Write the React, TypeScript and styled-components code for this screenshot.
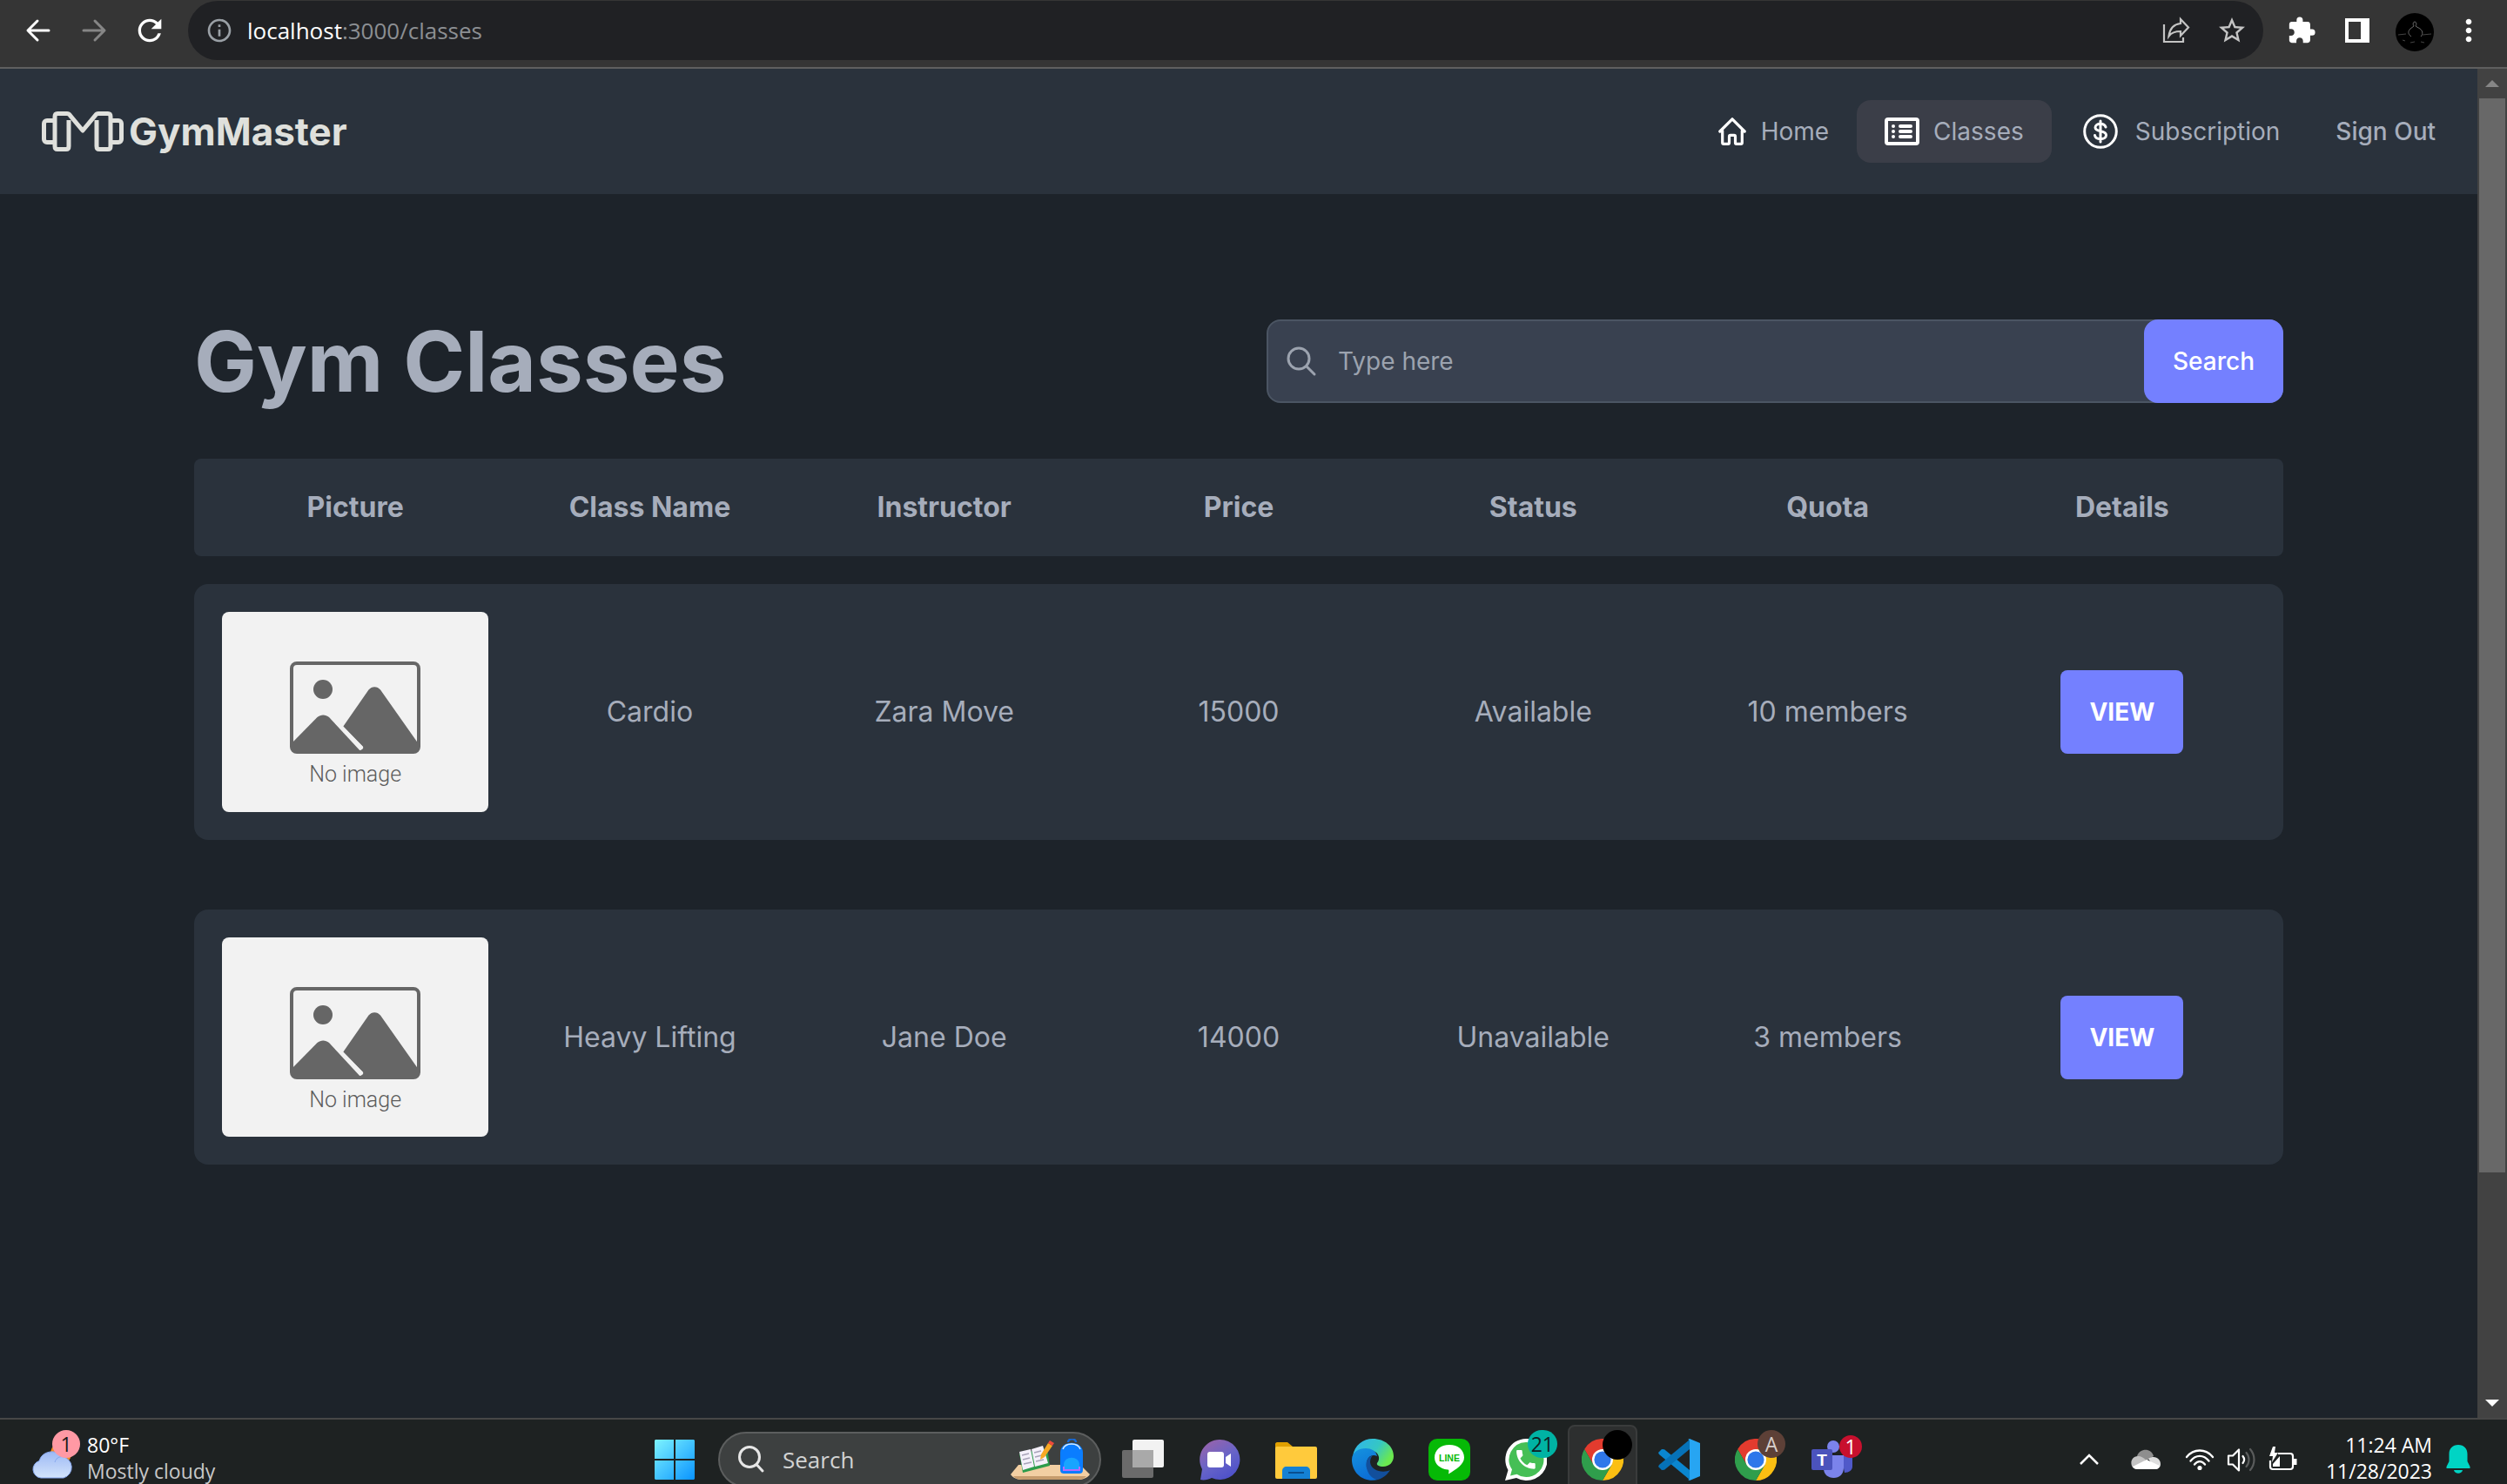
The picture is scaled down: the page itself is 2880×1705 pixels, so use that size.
import React from "react";
import styled, { createGlobalStyle } from "styled-components";
import {
  MdExtension,
  MdInfoOutline,
  MdMoreVert,
  MdRefresh,
  MdStarBorder,
} from "react-icons/md";

const color = {
  chrome: "#353535",
  omnibox: "#202124",
  nav: "#2a323c",
  page: "#1d232a",
  pill: "#3b3e48",
  text: "#a6adbb",
  primary: "#7480ff",
  taskbar: "#1e2222",
};

const uiFont = `"Segoe UI", "Open Sans", "Noto Sans", sans-serif`;
const appFont = `Inter, "Liberation Sans", sans-serif`;

const GlobalStyle = createGlobalStyle`
  *, *::before, *::after { box-sizing: border-box; }
  body { margin: 0; background: ${color.page}; font-family: ${appFont}; }
  button, input { font: inherit; color: inherit; }
  button { border: 0; padding: 0; background: none; cursor: pointer; }
  svg { display: block; flex: none; }
  a { color: inherit; text-decoration: none; }
  h1 { margin: 0; }
`;

const Screen = styled.div`
  display: grid;
  grid-template-rows: auto minmax(0, 1fr) 76px;
  height: 100vh;
  overflow: hidden;
`;

/* ---------- browser toolbar ---------- */

const Toolbar = styled.header`
  display: flex;
  align-items: flex-start;
  height: 79px;
  padding: 1px 24px 0;
  background: ${color.chrome};
  border-bottom: 2px solid #5f5f5f;
  font-family: ${uiFont};
`;

const ToolGroup = styled.div`
  display: flex;
  align-items: center;
  gap: 24px;
  height: 68px;
`;

const ToolButton = styled.button<{ $tone?: string }>`
  display: grid;
  place-items: center;
  width: 40px;
  height: 40px;
  color: ${(p) => p.$tone ?? "#ffffff"};
`;

const Omnibox = styled.div`
  display: flex;
  align-items: center;
  flex: 1;
  height: 68px;
  margin: 0 24px;
  padding: 0 16px 0 20px;
  border-radius: 34px;
  background: ${color.omnibox};
`;

const Address = styled.div`
  flex: 1;
  padding-left: 16px;
  font-size: 26px;
  line-height: 36px;
  color: #8c8f93;

  strong {
    font-weight: 400;
    color: #ffffff;
  }
`;

/* ---------- page frame ---------- */

const Viewport = styled.div`
  display: flex;
  min-height: 0;
`;

const Page = styled.div`
  flex: 1;
  min-width: 0;
  background: ${color.page};
  color: ${color.text};
`;

const ScrollTrack = styled.div`
  display: flex;
  flex-direction: column;
  width: 34px;
  padding: 0 2px;
  background: #424242;
`;

const ScrollArrow = styled.div`
  display: grid;
  place-items: center;
  height: 34px;
`;

const ScrollThumb = styled.div`
  flex: 1234;
  background: #686868;
`;

const ScrollRest = styled.div`
  flex: 248;
`;

/* ---------- site navigation ---------- */

const NavBar = styled.nav`
  display: flex;
  align-items: center;
  justify-content: space-between;
  height: 144px;
  padding: 0 16px 0 48px;
  background: ${color.nav};
`;

const Brand = styled.a`
  display: flex;
  align-items: center;
  gap: 6px;
  color: #dfe0dc;
  font-size: 44px;
  font-weight: 700;
  line-height: 56px;
`;

const NavList = styled.div`
  display: flex;
  align-items: center;
`;

const NavLink = styled.a<{ $active?: boolean; $strong?: boolean }>`
  display: flex;
  align-items: center;
  gap: 16px;
  height: 72px;
  padding: 0 32px;
  border-radius: 16px;
  background: ${(p) => (p.$active ? color.pill : "transparent")};
  font-size: 28px;
  font-weight: ${(p) => (p.$strong ? 500 : 400)};
  line-height: 40px;

  svg {
    color: #ffffff;
  }
`;

const IconSlot = styled.span`
  display: grid;
  place-items: center;
  width: 48px;
`;

/* ---------- classes page ---------- */

const Main = styled.main`
  max-width: 2400px;
  margin: 0 auto;
  padding-top: 144px;
`;

const Heading = styled.div`
  display: grid;
  grid-template-columns: 1fr 1fr;
  align-items: center;
  gap: 64px;
`;

const Title = styled.h1`
  font-size: 96px;
  font-weight: 700;
  line-height: 96px;
`;

const SearchForm = styled.form`
  display: flex;
  height: 96px;
  border: 2px solid #4b5563;
  border-radius: 16px;
  background: #394150;
  font-size: 28px;
`;

const SearchLabel = styled.label`
  display: flex;
  align-items: center;
  flex: 1;
  gap: 24px;
  padding-left: 20px;
  color: #9ca3af;
`;

const SearchInput = styled.input`
  flex: 1;
  min-width: 0;
  padding: 0;
  border: 0;
  outline: 0;
  background: transparent;

  &::placeholder {
    color: #9ca3af;
    opacity: 1;
  }
`;

const PrimaryButton = styled.button<{ $radius: number }>`
  height: 96px;
  padding: 0 33px;
  border-radius: ${(p) => p.$radius}px;
  background: ${color.primary};
  color: #ffffff;
  font-size: 28px;
  font-weight: ${(p) => (p.$radius > 8 ? 500 : 700)};
  line-height: 40px;

  ${SearchForm} & {
    margin: -2px;
  }
`;

const ClassTable = styled.table`
  display: flex;
  flex-direction: column;
  gap: 32px;
  margin-top: 64px;
  font-size: 32px;
  line-height: 48px;
  text-align: center;

  thead {
    display: block;
  }

  tbody {
    display: flex;
    flex-direction: column;
    gap: 80px;
  }
`;

const Row = styled.tr<{ $head?: boolean }>`
  display: grid;
  grid-template-columns: repeat(7, minmax(0, 1fr));
  align-items: center;
  gap: 32px;
  padding: 32px;
  border-radius: ${(p) => (p.$head ? 8 : 16)}px;
  background: ${color.nav};

  th,
  td {
    padding: 0;
  }

  th {
    font-weight: 700;
  }
`;

const Picture = styled.figure`
  display: flex;
  flex-direction: column;
  align-items: center;
  aspect-ratio: 4 / 3;
  margin: 0;
  padding-top: 57px;
  border-radius: 8px;
  background: #f2f2f2;
  color: #5c5c5c;

  figcaption {
    margin-top: 6px;
    font-family: "Liberation Sans Narrow", Roboto, sans-serif;
    font-size: 25px;
    font-weight: 300;
    line-height: 36px;
  }
`;

/* ---------- taskbar ---------- */

const Taskbar = styled.footer`
  overflow: hidden;
  border-top: 2px solid #474747;
  background: ${color.taskbar};
  color: #ffffff;
  font-family: ${uiFont};
  font-size: 23px;
  line-height: 30px;
`;

const TaskRow = styled.div`
  display: grid;
  grid-template-columns: 1fr auto 1fr;
  align-items: center;
  height: 92px;
`;

const Weather = styled.button`
  display: flex;
  align-items: center;
  gap: 14px;
  padding-left: 36px;
  text-align: left;
`;

const WeatherText = styled.span`
  display: flex;
  flex-direction: column;
  padding-bottom: 4px;

  small {
    font-size: inherit;
    color: #c8c8c8;
  }
`;

const BadgeHost = styled.span`
  position: relative;
  display: block;
`;

const Badge = styled.span<{ $bg: string; $fg: string; $size?: number; $top?: number; $right?: number }>`
  position: absolute;
  top: ${(p) => p.$top ?? -10}px;
  right: ${(p) => p.$right ?? -12}px;
  min-width: ${(p) => p.$size ?? 32}px;
  height: ${(p) => p.$size ?? 32}px;
  padding: 0 4px;
  border-radius: 18px;
  background: ${(p) => p.$bg};
  color: ${(p) => p.$fg};
  font-size: 23px;
  line-height: ${(p) => p.$size ?? 32}px;
  text-align: center;
`;

const Apps = styled.div`
  display: flex;
  align-items: center;
`;

const AppButton = styled.button<{ $open?: boolean }>`
  display: grid;
  place-items: center;
  width: 80px;
  height: 80px;
  margin: 0 4px;
  border: ${(p) => (p.$open ? "2px solid #3a3c3c" : "0")};
  border-radius: 8px;
  background: ${(p) => (p.$open ? "#2d2f2f" : "transparent")};
`;

const TaskSearch = styled.label`
  display: flex;
  align-items: center;
  width: 440px;
  height: 64px;
  margin: 0 4px 0 6px;
  padding: 0 10px 0 18px;
  border: 2px solid #5c5e5e;
  border-radius: 32px;
  background: #3d4040;
  gap: 18px;

  input {
    flex: 1;
    min-width: 0;
    padding: 0;
    border: 0;
    outline: 0;
    background: transparent;
    font-size: 26px;
    line-height: 36px;
  }

  input::placeholder {
    color: #d2d3d3;
    opacity: 1;
  }
`;

const Tray = styled.div`
  display: flex;
  align-items: center;
  justify-content: flex-end;
  padding-right: 42px;
`;

const TrayIcons = styled.div`
  display: flex;
  align-items: center;
  gap: 28px;
  margin-right: 32px;
`;

const StatusIcons = styled.button`
  display: flex;
  align-items: center;
  gap: 14px;
`;

const Clock = styled.time`
  display: flex;
  flex-direction: column;
  margin-right: 16px;
  padding-bottom: 4px;
  text-align: right;
`;

/* ---------- drawings ---------- */

const ArrowIcon = ({ flip }: { flip?: boolean }) => (
  <svg width="30" height="30" viewBox="0 0 30 30" fill="none" stroke="currentColor" strokeWidth="3" strokeLinecap="round" strokeLinejoin="round">
    <path d={flip ? "M3 15H26M16 4l11 11-11 11" : "M27 15H4M14 4L3 15l11 11"} />
  </svg>
);

const ShareIcon = () => (
  <svg width="32" height="32" viewBox="0 0 32 32" fill="none" stroke="currentColor" strokeWidth="2.2">
    <path d="M2 9v20h22v-5" />
    <path d="M21 3l9 9.5-9 9.5v-5c-6 0-10.500 1.500-13.500 5.500 1-8 5-13.500 13.500-14.500z" />
  </svg>
);

const SidePanelIcon = () => (
  <svg width="28" height="28" viewBox="0 0 28 28">
    <path fill="currentColor" fillRule="evenodd" d="M0 0h28v28H0zM4 4v20h14V4z" />
  </svg>
);

const Avatar = () => (
  <svg width="44" height="44" viewBox="0 0 44 44">
    <circle cx="22" cy="22" r="22" fill="#000" />
    <g fill="none" stroke="#6a6a6a" strokeWidth="1">
      <path d="M22 10c2 0 2.500 3 1 5l5 3c3 2 4 6 1 9M22 10c-2 0-2.500 3-1 5l-4 3c-3 3-3 6 1 9" />
      <path d="M3 25l9-1M31 25l10-1M8 31l3 1M17 34l5-1M29 33l4 1" stroke="#444" />
    </g>
  </svg>
);

const Triangle = ({ down }: { down?: boolean }) => (
  <svg width="16" height="8" viewBox="0 0 16 8">
    <path d={down ? "M0 0h16L8 8z" : "M0 8h16L8 0z"} fill={down ? "#ffffff" : "#868686"} />
  </svg>
);

const LogoIcon = () => (
  <svg width="94" height="46" viewBox="0 0 94 46" fill="none" stroke="currentColor" strokeWidth="5" strokeLinejoin="round">
    <path d="M14 10.500H6c-2 0-3.500 1.500-3.500 3.500v18c0 2 1.500 3.500 3.500 3.500h8" />
    <path d="M80 10.500h8c2 0 3.500 1.500 3.500 3.500v18c0 2-1.500 3.500-3.500 3.500h-8" />
    <path d="M31 10v30c0 2-1 3.500-3 3.500H18c-2 0-3-1.500-3-3.500V6c0-2 1-3.500 3-3.500h11c1.500 0 2.500.5 3.300 1.800L47 22 61.700 4.300C62.500 3 63.500 2.500 65 2.500h11c2 0 3 1.500 3 3.500v34c0 2-1 3.500-3 3.500H66c-2 0-3-1.500-3-3.500V10" />
  </svg>
);

const HomeIcon = () => (
  <svg width="34" height="32" viewBox="-1 0 34 32" fill="none" stroke="currentColor" strokeWidth="3.200" strokeLinecap="round" strokeLinejoin="round">
    <path d="M1.800 16L16 1.800 30.200 16M4.700 15v14c0 1 .5 1.400 1.400 1.400h5.200c.8 0 1.200-.5 1.200-1.300V22c0-1 .5-1.600 1.400-1.600h4.200c.9 0 1.400.6 1.400 1.600v7.100c0 .8.400 1.300 1.200 1.300h5.200c.9 0 1.400-.4 1.400-1.400V15" />
  </svg>
);

const ListIcon = () => (
  <svg width="40" height="32" viewBox="0 0 40 32" fill="none" stroke="currentColor" strokeWidth="4">
    <rect x="2" y="2" width="36" height="28" rx="2" />
    <path d="M18 10h12M18 16h12M18 22h12M10 10h.01M10 16h.01M10 22h.01" strokeLinecap="round" />
  </svg>
);

const DollarIcon = () => (
  <svg width="40" height="40" viewBox="0 0 40 40" fill="none" stroke="currentColor" strokeWidth="3" strokeLinecap="round">
    <circle cx="20" cy="20" r="18.300" />
    <path d="M20 8v24M26 15c-.8-2.500-3-3.700-6-3.700-3.500 0-6 1.600-6 4.200 0 6 12.500 2.500 12.500 8.700 0 2.800-2.800 4.500-6.500 4.500-3.500 0-6-1.500-6.500-4.200" />
  </svg>
);

const SearchIcon = () => (
  <svg width="36" height="36" viewBox="0 0 36 36" fill="none" stroke="currentColor" strokeWidth="3" strokeLinecap="round">
    <circle cx="15" cy="15" r="12" />
    <path d="M24 24l9 9" />
  </svg>
);

const TaskSearchIcon = () => (
  <svg width="36" height="36" viewBox="0 0 36 36" fill="none" stroke="#e6e6e6" strokeWidth="3" strokeLinecap="round">
    <circle cx="16" cy="15" r="11.500" />
    <path d="M24.500 24l6.500 7" />
  </svg>
);

const NoImageDrawing = () => (
  <svg width="150" height="106" viewBox="0 0 150 106">
    <rect x="2" y="2" width="146" height="102" rx="6" fill="#f2f2f2" stroke="#666" strokeWidth="4" />
    <circle cx="38" cy="32" r="11" fill="#666" />
    <path fill="#666" d="M90.500 32.500c3.500-4.500 10-4.500 13.500 0L148 95v4c0 3-2 5-5 5H80l4-6L61 75z" />
    <path fill="#666" d="M2 94l29.500-30c4-3.500 9.500-3.500 13.500 0L82 104H8c-4 0-6-2-6-5z" />
    <path d="M54 70l28 29" stroke="#f2f2f2" strokeWidth="4.500" strokeLinecap="round" />
  </svg>
);

const CloudIcon = () => (
  <svg width="50" height="48" viewBox="0 0 50 48">
    <defs>
      <linearGradient id="cloud" x1="0" y1="0" x2="0" y2="1">
        <stop offset="0" stopColor="#9db9f5" />
        <stop offset="1" stopColor="#d3e4fb" />
      </linearGradient>
    </defs>
    <circle cx="34" cy="17" r="12" fill="#f58a1f" />
    <path d="M11 45a10 10 0 0 1-2-19.500A15 15 0 0 1 35 20.500 12.500 12.500 0 0 1 37 45z" fill="url(#cloud)" stroke="#86a7ee" />
    <path d="M27 27c1-4 4-6.500 9-6.500" stroke="#86a7ee" fill="none" />
  </svg>
);

const WindowsIcon = () => (
  <svg width="48" height="48" viewBox="0 0 48 48">
    <defs>
      <linearGradient id="win" x1="0" y1="0" x2="1" y2="1">
        <stop offset="0" stopColor="#7df3ff" />
        <stop offset="1" stopColor="#0a94ff" />
      </linearGradient>
    </defs>
    <path fill="url(#win)" d="M2 1h21v22H1V2zM25 1h21l1 1v21H25zM1 25h22v22H2l-1-1zM25 25h22v21l-1 1H25z" />
  </svg>
);

const DeskIcon = () => (
  <svg width="92" height="48" viewBox="0 0 92 48">
    <path d="M0 41l9-11h71l11 11c-3 4-8 6-14 6H14C7 47 3 45 0 41z" fill="#f2cfa3" />
    <path d="M3 43h84c-3 3-6 4-11 4H14c-5 0-8-1-11-4z" fill="#c69c6d" />
    <path d="M10 17l4 22 31-8-3-20z" fill="#2c9c4b" />
    <path d="M10 15l13-3 4 20-13 4zM24 12l13-4 6 20-15 4z" fill="#f4f0fa" />
    <path d="M13 19l8-2M14 24l8-2M15 29l9-2M27 16l8-2M28 21l8-2M29 26l9-2" stroke="#a7a3b8" strokeWidth="1.500" />
    <path d="M34 24l1-6 8-13 5 3-9 13z" fill="#f7a823" />
    <path d="M43 5l2-3 5 3-2 3z" fill="#ef4b3c" />
    <path d="M66 4c0-5 9-5 9 0" fill="none" stroke="#1769d6" strokeWidth="2.500" />
    <path d="M57 16c0-15 26-15 26 0v20c0 3-2 4-4 4H61c-2 0-4-1-4-4z" fill="#0a7dff" />
    <path d="M60 12c3-8 17-8 20 0" fill="none" stroke="#d8ecff" strokeWidth="1.500" />
    <path d="M61 30c0-11 18-11 18 0v7H61z" fill="#18a4ff" />
    <path d="M61 32v4h18v-4" fill="none" stroke="#b36bff" strokeWidth="2" />
  </svg>
);

const TaskViewIcon = () => (
  <svg width="48" height="48" viewBox="0 0 48 48">
    <rect x="12" y="1" width="36" height="32" rx="2" fill="#f2f2f2" />
    <rect x="0" y="13" width="36" height="32" rx="2" fill="#6b6b6b" />
    <path d="M12 13h24v20H12z" fill="#a9a9a9" />
  </svg>
);

const ChatIcon = () => (
  <svg width="48" height="48" viewBox="0 0 48 48">
    <defs>
      <linearGradient id="chat" x1="0" y1="0" x2=".6" y2="1">
        <stop offset="0" stopColor="#a063a6" />
        <stop offset=".6" stopColor="#6764c8" />
        <stop offset="1" stopColor="#4f52c9" />
      </linearGradient>
    </defs>
    <path d="M24 1a23 23 0 1 1-9 44c-4 2-9 3-13 2l2-12A23 23 0 0 1 24 1z" fill="url(#chat)" />
    <rect x="10" y="15" width="19" height="18" rx="3" fill="#fff" />
    <path d="M31 21l6-4v15l-6-4z" fill="#fff" />
  </svg>
);

const FolderIcon = () => (
  <svg width="48" height="48" viewBox="0 0 48 48">
    <path d="M0 12V6c0-1 1-2 2-2h12l6 5h26v6H0z" fill="#e0a000" />
    <rect x="0" y="9" width="48" height="37" rx="2" fill="#ffca3c" />
    <path d="M8 46V37c0-3 2-5 5-5h22c3 0 5 2 5 5v9z" fill="#1481d4" />
    <path d="M15 39h18" stroke="#0a4f8f" strokeWidth="2" />
  </svg>
);

const EdgeIcon = () => (
  <svg width="48" height="48" viewBox="0 0 48 48">
    <defs>
      <linearGradient id="edgeTop" x1="0" y1="0" x2="1" y2=".5">
        <stop offset="0" stopColor="#2fb4f0" />
        <stop offset=".6" stopColor="#35c7c4" />
        <stop offset="1" stopColor="#6be84f" />
      </linearGradient>
      <linearGradient id="edgeLeft" x1="0" y1="0" x2=".4" y2="1">
        <stop offset="0" stopColor="#1593df" />
        <stop offset="1" stopColor="#0c6fd6" />
      </linearGradient>
    </defs>
    <path d="M1 20C3 7 13 0 24 0c14 0 24 9 24 20 0 7-5 12-12 12-5 0-8-2-7-4 5-6 1-14-8-15C11 11 3 14 1 20z" fill="url(#edgeTop)" />
    <path d="M0 24c0-9 8-13 16-13 6 0 12 3 13 9-6-3-12 1-12 9 0 9 6 16 13 18C14 51 0 40 0 24z" fill="url(#edgeLeft)" />
    <path d="M24 19c-6 2-9 8-7 15 2 8 8 13 13 13 6-2 11-6 14-11-8 4-22 1-23-9 0-3 1-6 3-8z" fill="#124f9c" />
  </svg>
);

const LineIcon = () => (
  <svg width="48" height="48" viewBox="0 0 48 48">
    <rect width="48" height="48" rx="10" fill="#06b906" />
    <path d="M24 7c10 0 17 6 17 14.500 0 8-9 13.500-18 19 .5-3 1-5-1-5C13 34.500 7 29 7 21.500 7 13 14 7 24 7z" fill="#fff" />
    <text x="24" y="26" textAnchor="middle" fontFamily="Liberation Sans, sans-serif" fontWeight="700" fontSize="10.500" fill="#06b906">LINE</text>
  </svg>
);

const WhatsAppIcon = () => (
  <svg width="48" height="48" viewBox="0 0 48 48">
    <path d="M24 0a24 24 0 1 1-11 45L0 48l3.500-12A24 24 0 0 1 24 0z" fill="#fff" />
    <path d="M24 4a20 20 0 1 1-10.500 36.700L6 42.500l2-7.300A20 20 0 0 1 24 4z" fill="#45bf55" />
    <path transform="translate(9.500 9.500) scale(1.200)" fill="#fff" d="M6.620 10.790c1.440 2.830 3.760 5.140 6.590 6.590l2.200-2.200c.27-.27.67-.36 1.020-.24 1.120.37 2.330.57 3.570.57.55 0 1 .45 1 1V20c0 .55-.45 1-1 1-9.390 0-17-7.610-17-17 0-.55.450-1 1-1h3.500c.55 0 1 .45 1 1 0 1.250.2 2.450.57 3.570.11.350.03.740-.25 1.020l-2.200 2.200z" />
  </svg>
);

const ChromeIcon = () => (
  <svg width="48" height="48" viewBox="0 0 48 48">
    <path d="M3.200 12A24 24 0 0 1 44.800 12H24L13.600 30z" fill="#e33b2e" />
    <path d="M44.800 12A24 24 0 0 1 24 48l10.400-18L24 12z" fill="#fbbf12" />
    <path d="M3.200 12A24 24 0 0 0 24 48l10.400-18H13.600z" fill="#2f9e4c" />
    <circle cx="24" cy="24" r="12" fill="#fff" />
    <circle cx="24" cy="24" r="9.600" fill="#2f77ea" />
  </svg>
);

const CodeIcon = () => (
  <svg width="48" height="48" viewBox="0 0 48 48">
    <path d="M0 16l4-4 3 .300L36 36v11L1 18z" fill="#0a86cf" />
    <path d="M0 32l4 4 3-.300L36 12V1L1 30z" fill="#0672b8" />
    <path d="M36 0l12 5v38l-12 5-2-1c1.500 0 2-1 2-2V3c0-1-.5-2-2-2z" fill="#27a5f2" />
  </svg>
);

const TeamsIcon = () => (
  <svg width="48" height="48" viewBox="0 0 48 48">
    <circle cx="25" cy="9" r="7" fill="#7b83eb" />
    <path d="M34 19h13v13c0 4-4 7-9 7z" fill="#5059c9" />
    <path d="M14 19h23v14c0 8-5 12-11.500 12S14 41 14 34z" fill="#7b83eb" />
    <rect x="0" y="12" width="24" height="24" rx="2" fill="#4b53bc" />
    <text x="12" y="31" textAnchor="middle" fontFamily="Liberation Sans, sans-serif" fontWeight="700" fontSize="19" fill="#fff">T</text>
  </svg>
);

const ChevronUp = () => (
  <svg width="22" height="16" viewBox="0 0 22 16" fill="none" stroke="#fff" strokeWidth="2.500">
    <path d="M1 13L11 3l10 10" />
  </svg>
);

const OneDriveIcon = () => (
  <svg width="34" height="24" viewBox="0 0 34 24">
    <path d="M7 8c3-9 16-10 19 0l-12 8z" fill="#8e8e8e" />
    <path d="M7 23C-2 23-2 8 8 8c4 0 6 2 9 4l-11 11z" fill="#c4c4c4" />
    <path d="M20 11c8-5 14 1 14 6 0 4-3 6-6 6z" fill="#dedede" />
    <path d="M2 20l16-8 15 7c-1 3-3 4-6 4H7c-2 0-4-1-5-3z" fill="#fff" />
  </svg>
);

const WifiIcon = () => (
  <svg width="34" height="26" viewBox="0 0 34 26" fill="none" stroke="#fff" strokeWidth="2.300" strokeLinecap="round">
    <path d="M2 10c8-10 22-10 30 0M6.500 14.500c6-7.500 15-7.500 21 0M11 18.500c3.500-4.500 8.500-4.500 12 0" />
    <circle cx="17" cy="22.500" r="2.600" fill="#fff" stroke="none" />
  </svg>
);

const SpeakerIcon = () => (
  <svg width="34" height="30" viewBox="0 0 34 30" fill="none" stroke="#fff" strokeWidth="2.200" strokeLinecap="round" strokeLinejoin="round">
    <path d="M2 10.500h5l7-7v24l-7-7H2z" />
    <path d="M18.500 11c2 2.500 2 5.500 0 8" />
    <path d="M22.500 7c4 4.500 4 11.500 0 16M27 3c6 7 6 17 0 24" stroke="#5a5c5c" />
  </svg>
);

const BatteryIcon = () => (
  <svg width="34" height="30" viewBox="0 0 34 30" fill="none" stroke="#fff" strokeWidth="2.200">
    <path d="M11 8h14c2 0 3 1 3 3v12c0 2-1 3-3 3H5c-2 0-3-1-3-3v-7" />
    <path d="M5 23v-3l8-9v12zM5 0L1 11h4l-1 7 7-11H7l1-7zM29 14h3.500v7H29z" fill="#fff" stroke="none" />
  </svg>
);

const BellIcon = () => (
  <svg width="28" height="34" viewBox="0 0 28 34">
    <path d="M14 0c6.500 0 10.500 4.500 10.500 10.500V19l3 6v2H.5v-2l3-6v-8.500C3.500 4.500 7.500 0 14 0z" fill="#00d4c4" />
    <path d="M9 29h10c-1 5-9 5-10 0z" fill="#00d4c4" />
  </svg>
);

/* ---------- data ---------- */

const columns = ["Picture", "Class Name", "Instructor", "Price", "Status", "Quota", "Details"];

const classes = [
  { name: "Cardio", instructor: "Zara Move", price: 15000, status: "Available", quota: 10 },
  { name: "Heavy Lifting", instructor: "Jane Doe", price: 14000, status: "Unavailable", quota: 3 },
];

const taskApps: { label: string; icon: React.ReactNode; open?: boolean; badge?: React.ReactNode }[] = [
  { label: "Task view", icon: <TaskViewIcon /> },
  { label: "Chat", icon: <ChatIcon /> },
  { label: "File Explorer", icon: <FolderIcon /> },
  { label: "Edge", icon: <EdgeIcon /> },
  { label: "LINE", icon: <LineIcon /> },
  { label: "WhatsApp", icon: <WhatsAppIcon />, badge: <Badge $bg="#00b3a4" $fg="#10201f">21</Badge> },
  {
    label: "Chrome",
    icon: <ChromeIcon />,
    open: true,
    badge: <Badge $bg="#000000" $fg="#333333" $size={34} $right={-10} />,
  },
  { label: "Visual Studio Code", icon: <CodeIcon /> },
  {
    label: "Chrome, second profile",
    icon: <ChromeIcon />,
    badge: <Badge $bg="#5d4037" $fg="#d8cfcc" $right={-10}>A</Badge>,
  },
  {
    label: "Teams",
    icon: <TeamsIcon />,
    badge: <Badge $bg="#c8102e" $fg="#ffffff" $size={26} $top={-4} $right={-10}>1</Badge>,
  },
];

/* ---------- parts ---------- */

const BrowserToolbar = () => (
  <Toolbar>
    <ToolGroup>
      <ToolButton aria-label="Back"><ArrowIcon /></ToolButton>
      <ToolButton aria-label="Forward" $tone="#868686"><ArrowIcon flip /></ToolButton>
      <ToolButton aria-label="Reload"><MdRefresh size={40} /></ToolButton>
    </ToolGroup>
    <Omnibox>
      <MdInfoOutline size={32} color="#9aa0a6" />
      <Address><strong>localhost</strong>:3000/classes</Address>
      <ToolGroup>
        <ToolButton aria-label="Share" $tone="#c4c4c4"><ShareIcon /></ToolButton>
        <ToolButton aria-label="Bookmark" $tone="#c4c4c4"><MdStarBorder size={36} /></ToolButton>
      </ToolGroup>
    </Omnibox>
    <ToolGroup>
      <ToolButton aria-label="Extensions"><MdExtension size={34} /></ToolButton>
      <ToolButton aria-label="Side panel"><SidePanelIcon /></ToolButton>
      <ToolButton aria-label="Profile"><Avatar /></ToolButton>
      <ToolButton aria-label="Menu"><MdMoreVert size={40} /></ToolButton>
    </ToolGroup>
  </Toolbar>
);

const SiteNav = () => (
  <NavBar>
    <Brand href="#"><LogoIcon />GymMaster</Brand>
    <NavList>
      <NavLink href="#home"><HomeIcon />Home</NavLink>
      <NavLink href="#classes" $active><ListIcon />Classes</NavLink>
      <NavLink href="#subscription"><IconSlot><DollarIcon /></IconSlot>Subscription</NavLink>
      <NavLink href="#signout" $strong>Sign Out</NavLink>
    </NavList>
  </NavBar>
);

const ClassesPage = () => (
  <Main>
    <Heading>
      <Title>Gym Classes</Title>
      <SearchForm onSubmit={(e) => e.preventDefault()}>
        <SearchLabel>
          <SearchIcon />
          <SearchInput type="text" placeholder="Type here" aria-label="Search classes" />
        </SearchLabel>
        <PrimaryButton type="submit" $radius={16}>Search</PrimaryButton>
      </SearchForm>
    </Heading>
    <ClassTable>
      <thead>
        <Row $head>
          {columns.map((c) => <th key={c} scope="col">{c}</th>)}
        </Row>
      </thead>
      <tbody>
        {classes.map((c) => (
          <Row key={c.name}>
            <td>
              <Picture>
                <NoImageDrawing />
                <figcaption>No image</figcaption>
              </Picture>
            </td>
            <td>{c.name}</td>
            <td>{c.instructor}</td>
            <td>{c.price}</td>
            <td>{c.status}</td>
            <td>{c.quota} members</td>
            <td><PrimaryButton type="button" $radius={8}>VIEW</PrimaryButton></td>
          </Row>
        ))}
      </tbody>
    </ClassTable>
  </Main>
);

const DesktopTaskbar = () => (
  <Taskbar>
    <TaskRow>
      <Weather type="button">
        <BadgeHost>
          <CloudIcon />
          <Badge $bg="#ff99a4" $fg="#1a1a1a" $right={-6}>1</Badge>
        </BadgeHost>
        <WeatherText>
          <span>80°F</span>
          <small>Mostly cloudy</small>
        </WeatherText>
      </Weather>
      <Apps>
        <AppButton aria-label="Start"><WindowsIcon /></AppButton>
        <TaskSearch>
          <TaskSearchIcon />
          <input type="text" placeholder="Search" aria-label="Search Windows" />
          <DeskIcon />
        </TaskSearch>
        {taskApps.map((app) => (
          <AppButton key={app.label} aria-label={app.label} $open={app.open}>
            <BadgeHost>
              {app.icon}
              {app.badge}
            </BadgeHost>
          </AppButton>
        ))}
      </Apps>
      <Tray>
        <TrayIcons>
          <ToolButton aria-label="Show hidden icons"><ChevronUp /></ToolButton>
          <OneDriveIcon />
          <StatusIcons type="button" aria-label="Network, volume and battery">
            <WifiIcon />
            <SpeakerIcon />
            <BatteryIcon />
          </StatusIcons>
        </TrayIcons>
        <Clock>
          <span>11:24 AM</span>
          <span>11/28/2023</span>
        </Clock>
        <BellIcon />
      </Tray>
    </TaskRow>
  </Taskbar>
);

export default function App() {
  return (
    <Screen>
      <GlobalStyle />
      <BrowserToolbar />
      <Viewport>
        <Page>
          <SiteNav />
          <ClassesPage />
        </Page>
        <ScrollTrack>
          <ScrollArrow><Triangle /></ScrollArrow>
          <ScrollThumb />
          <ScrollRest />
          <ScrollArrow><Triangle down /></ScrollArrow>
        </ScrollTrack>
      </Viewport>
      <DesktopTaskbar />
    </Screen>
  );
}
